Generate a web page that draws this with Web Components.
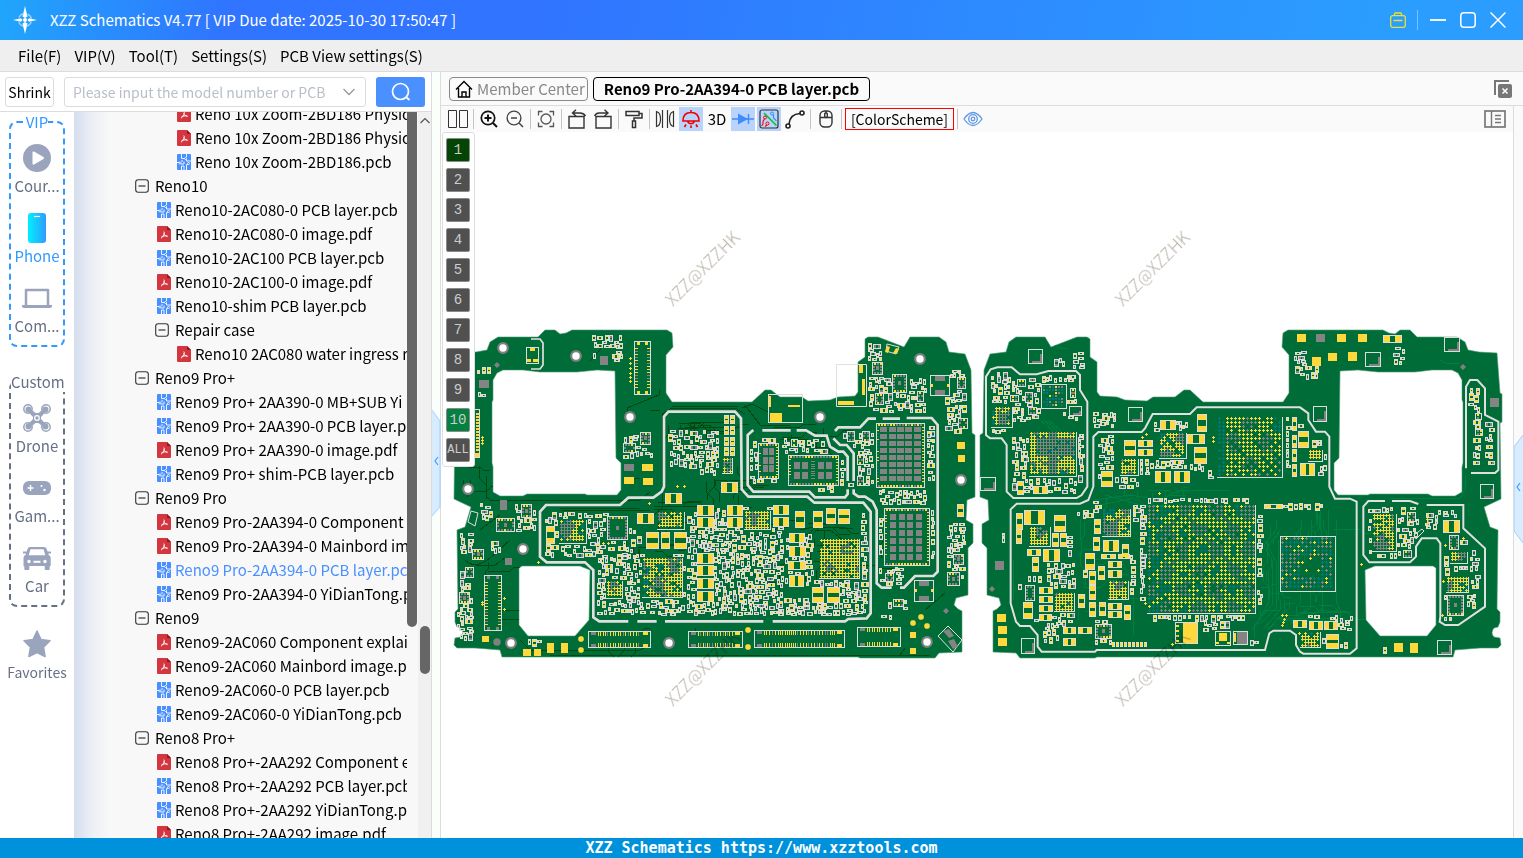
<!DOCTYPE html>
<html lang="en">
<head>
<meta charset="utf-8">
<title>XZZ Schematics</title>
<style>
html,body{height:100%;margin:0}
body{font:15px/24px "Noto Sans CJK SC","Noto Sans",sans-serif;color:#000;overflow:hidden}
</style>
</head>
<body>
<xzz-app></xzz-app>
<script>
const define = (name, css, html, setup) => {
  const t = document.createElement('template');
  t.innerHTML = `<style>*{box-sizing:border-box}button{font:inherit;color:inherit;background:none;border:0;padding:0;margin:0;cursor:pointer}svg{display:block}${css}</style>${html}`;
  customElements.define(name, class extends HTMLElement {
    connectedCallback() {
      if (this.shadowRoot) return;
      const root = this.attachShadow({mode: 'open'});
      root.append(t.content.cloneNode(true));
      if (setup) setup(this, root);
    }
  });
};

/* ---------- icons ---------- */
const PDF = '<path d="M1 0h9l4 4v11q0 1-1 1H1q-1 0-1-1V1q0-1 1-1z" fill="#d3363e"/><path d="M10 0l4 4h-3q-1 0-1-1z" fill="#8f151c"/><path d="M6.700 5.500q.6 0 .5 1.400c-.3 2-1.500 4.200-3.200 5.300M7 7.500c.5 1.500 2 2.800 3.600 2.800M4.500 10.800c1.500-.9 3.700-1.200 5.800-.7" fill="none" stroke="#fff" stroke-width="1"/>';
const PCB = '<rect width="14" height="16" rx="1" fill="#4a8fff"/><path d="M4.500 0v4.500h3M9.500 0v3M9.500 5v2H14M0 8.500h2M4 10H7V7.500M7 16v-4H4.500V16M9.500 16V10.500h1.500M5 8V6" fill="none" stroke="#fff" stroke-width=".9"/><g fill="#4a8fff" stroke="#fff" stroke-width=".8"><circle cx="8.500" cy="4.500" r="1"/><circle cx="3" cy="9" r="1"/><circle cx="11.500" cy="9.500" r="1"/></g>';
const ICONS = {
  pdf: ['0 0 14 16', PDF], pcb: ['0 0 14 16', PCB],
  minus: ['0 0 14 14', '<rect x=".7" y=".7" width="12.600" height="12.600" rx="2.500" fill="none" stroke="#333" stroke-width="1.100"/><path d="M3.500 7h7" stroke="#333" stroke-width="1.200"/>'],
  logo: ['0 0 24 28', '<path d="M12 0l2.500 10.500L12 12l-2.500-1.500zM12 28l2.500-10.500L12 16l-2.500 1.500zM0 14l8-1.800L9.500 14 8 15.800zM24 14l-8-1.800L14.500 14l1.500 1.800z" fill="#fff"/><circle cx="12" cy="14" r="2" fill="#fff"/><circle cx="12" cy="14" r="6.500" fill="none" stroke="#9fd3ff" stroke-width="1.300" stroke-dasharray="6 4.200" stroke-dashoffset="-2"/>'],
  bag: ['0 0 16 16', '<g fill="none" stroke="#e8e03a" stroke-width="1.300"><rect x=".7" y="3.700" width="14.600" height="11.600" rx="2"/><path d="M4.500 3.500v-1.500q0-1 1-1h5q1 0 1 1v1.500M3.500 8.500h9"/></g>'],
  min: ['0 0 16 16', '<path d="M0 8h16" stroke="#fff" stroke-width="1.800"/>'],
  max: ['0 0 16 16', '<rect x=".8" y=".8" width="14.400" height="14.400" rx="3" fill="none" stroke="#fff" stroke-width="1.500"/>'],
  close: ['0 0 16 16', '<path d="M.5.5l15 15M15.500.5l-15 15" stroke="#fff" stroke-width="1.500"/>'],
  search: ['0 0 20 20', '<circle cx="9.500" cy="9.500" r="8" fill="none" stroke="#fff" stroke-width="1.700"/><path d="M15 15l3.500 3" stroke="#fff" stroke-width="1.700"/>'],
  chev: ['0 0 12 8', '<path d="M.5 1L6 6.500 11.500 1" fill="none" stroke="#999" stroke-width="1.300"/>'],
  up: ['0 0 10 10', '<path d="M.5 7L5 2.500 9.500 7" fill="none" stroke="#555" stroke-width="1.200"/>'],
  home: ['0 0 18 18', '<g fill="none" stroke="#000" stroke-width="1.400"><path d="M1 9.500L9 1.500l8 8M3.500 8v9h11V8"/><path d="M7 17v-5h4v5"/></g>'],
  closeall: ['0 0 18 18', '<path d="M1 15V1h14" fill="none" stroke="#777" stroke-width="2"/><rect x="4" y="4" width="14" height="14" rx="2" fill="#777"/><path d="M8.500 8.500l5 5m0-5l-5 5" stroke="#fff" stroke-width="1.500"/>'],
  panel: ['0 0 22 18', '<rect x="1" y="1" width="20" height="16" fill="none" stroke="#777" stroke-width="1.700"/><path d="M7.500 1v16M11 5.500h6M11 9h6M11 12.500h6" stroke="#777" stroke-width="1.400"/>'],
  play: ['0 0 28 28', '<circle cx="14" cy="14" r="14" fill="#9aa5bd"/><path d="M9.500 8.500q0-1.500 1.500-1l9.500 5.500q1 1 0 2L11 20.500q-1.500.5-1.500-1z" fill="#fff"/>'],
  phone: ['0 0 18 30', '<defs><linearGradient id="a"><stop stop-color="#00f0ff"/><stop offset="1" stop-color="#2f9bff"/></linearGradient></defs><rect width="18" height="30" rx="3" fill="url(#a)"/><path d="M6 3.500h6" stroke="#fff" stroke-width="1.200"/>'],
  laptop: ['0 0 30 20', '<path d="M4 17V2h22v15" fill="none" stroke="#9aa5bd" stroke-width="2.500" stroke-linejoin="round"/><path d="M0 17h30v1q0 2-2 2H2q-2 0-2-2z" fill="#9aa5bd"/>'],
  drone: ['0 0 28 28', '<g fill="none" stroke="#9aa5bd" stroke-width="1.500"><circle cx="5" cy="5" r="4.200"/><circle cx="23" cy="5" r="4.200"/><circle cx="5" cy="23" r="4.200"/><circle cx="23" cy="23" r="4.200"/></g><g fill="#9aa5bd"><circle cx="5.500" cy="5.500" r="3"/><circle cx="22.500" cy="5.500" r="3"/><circle cx="5.500" cy="22.500" r="3"/><circle cx="22.500" cy="22.500" r="3"/><path d="M4 6.500L6.500 4l6 5h3l6-5L24 6.500 18 13v2l6 6.500-2.500 2.500-6-5h-3l-6 5L4 21.500 10 15v-2z"/></g><circle cx="14" cy="14" r="2.300" fill="none" stroke="#fff" stroke-width="1.200"/>'],
  game: ['0 0 28 14', '<rect width="28" height="14" rx="6" fill="#9aa5bd"/><path d="M7.500 4v6M4.500 7h6" stroke="#fff" stroke-width="1.400"/><circle cx="18.500" cy="5" r="1" fill="#fff"/><circle cx="21.500" cy="9" r="1.200" fill="#fff"/>'],
  car: ['0 0 28 23', '<path d="M7 0h14q2 0 2.700 2l2 6q2 .5 2 3v8h-1v3q0 1-1 1h-3q-1 0-1-1v-3H6.300v3q0 1-1 1h-3q-1 0-1-1v-3H.5v-8q0-2.500 2-3l2-6Q5.200 0 7 0z" fill="#9aa5bd"/><path d="M0 5.500h4M24 5.500h4" stroke="#9aa5bd" stroke-width="2"/><path d="M7.500 2.200h13l1.800 6H5.700z" fill="#fff"/><path d="M10.500 14.800h7" stroke="#fff" stroke-width="2"/><circle cx="6" cy="14.500" r="1.700" fill="#fff"/><circle cx="22" cy="14.500" r="1.700" fill="#fff"/>'],
  star: ['0 0 28 28', '<path d="M14 1l4 8.500 9 1.300-6.500 6.400 1.600 9.300L14 22.500l-8.100 4 1.600-9.300L1 10.800l9-1.300z" fill="#9aa5bd" stroke="#9aa5bd" stroke-width="1.500" stroke-linejoin="round"/>'],
  split: ['0 0 20 20', '<path d="M.5 1.500h8v17h-8zM11.500 1.500h8v17h-8z" fill="none" stroke="#333" stroke-width="1"/>'],
  zin: ['0 0 20 20', '<circle cx="9" cy="9" r="6.700" fill="none" stroke="#111" stroke-width="1.700"/><path d="M5.500 9h7M9 5.500v7M14 14l4 4" stroke="#111" stroke-width="2"/>'],
  zout: ['0 0 20 20', '<circle cx="9" cy="9" r="6.900" fill="none" stroke="#444" stroke-width="1.400"/><path d="M6 9h6M14 14l4 4" stroke="#444" stroke-width="1.500"/>'],
  fit: ['0 0 20 20', '<g fill="none" stroke="#555" stroke-width="1.300"><circle cx="10" cy="10" r="5"/><path d="M2.500 6.500v-4h4M13.500 2.500h4v4M17.500 13.500v4h-4M6.500 17.500h-4v-4"/></g>'],
  rotl: ['0 0 20 20', '<path d="M2 7.500h15V19H2zM6 4h7q3.500 0 5.500 3M9 .8L5.500 4 9 7" fill="none" stroke="#333" stroke-width="1.400" transform="translate(0 0)"/>'],
  rotr: ['0 0 20 20', '<path d="M3 7.500h15V19H3zM14 4H6Q3 4 1.500 7M11.500.8L15 4l-3.500 3" fill="none" stroke="#333" stroke-width="1.400"/>'],
  paint: ['0 0 20 20', '<g fill="none" stroke="#333" stroke-width="1.500"><path d="M2 2.500h13v4H2zM15 4.500h3V9h-8v3"/><path d="M8.500 12h3v6.500h-3z"/></g>'],
  mirror: ['0 0 20 20', '<path d="M7.500 1v18M12.500 1v18M1.500 2.500q4 1 4 7.500t-4 7.500zM18.500 2.500q-4 1-4 7.500t4 7.500z" fill="none" stroke="#333" stroke-width="1.200"/>'],
  lamp: ['0 0 20 20', '<g fill="none" stroke="#f00000" stroke-width="1.600"><path d="M2 12Q2 3.500 10 3.500T18 12zM10 3.500V1M6.500 12.500q3.500 4.500 7 0"/><path d="M10 16.500V19M5 15.500L3.500 18M15 15.500l1.500 2.500"/></g>'],
  diode: ['0 0 24 20', '<path d="M1 10h22M17.500 5v10" stroke="#3f8cff" stroke-width="1.400"/><path d="M7 4.500L17 10 7 15.500z" fill="#3f8cff"/>'],
  route: ['0 0 20 20', '<rect x="1" y="1" width="18" height="18" rx="2" fill="none" stroke="#333" stroke-width="1.200"/><path d="M5 4L17.500 16.500" stroke="#00c030" stroke-width="1.500"/><path d="M2.500 17L4 15V12.500L5.500 10M8 16l-2 1.500" fill="none" stroke="#f00" stroke-width="1.100"/><path d="M14.500 5.500V9l3 3" fill="none" stroke="#2f8cff" stroke-width="1.100"/><circle cx="6" cy="8.500" r="1.500" fill="none" stroke="#f00"/><circle cx="8.500" cy="14.500" r="1.500" fill="none" stroke="#f00"/><circle cx="13" cy="4.500" r="1.500" fill="none" stroke="#2f8cff"/>'],
  curve: ['0 0 20 20', '<g fill="none" stroke="#222" stroke-width="1.600"><path d="M4 15Q5 5 15 4.500"/><circle cx="17" cy="4" r="2"/><circle cx="3" cy="17" r="2"/></g>'],
  mouse: ['0 0 20 20', '<g fill="none" stroke="#333" stroke-width="1.400"><rect x="4" y="2" width="12" height="16" rx="4.500"/><path d="M4 8.500h12M10 2v2"/><rect x="8.700" y="4" width="2.600" height="4.500" rx="1"/></g>'],
  eye: ['0 0 20 20', '<g fill="none" stroke="#5f98e8" stroke-width="1.300"><path d="M1 10Q10-3 19 10 10 23 1 10z"/><circle cx="10" cy="10" r="4.300"/><circle cx="10" cy="10" r="1.800"/></g>']
};
define('ui-icon', ':host{display:block;flex:none}', '<svg aria-hidden="true"></svg>', (el, root) => {
  const [vb, body] = ICONS[el.getAttribute('name')];
  const s = root.querySelector('svg');
  const [, , w, h] = vb.split(' ');
  s.setAttribute('viewBox', vb);
  s.setAttribute('width', w); s.setAttribute('height', h);
  s.innerHTML = body;
});

/* ---------- window chrome ---------- */
define('title-bar', `
:host{display:flex;align-items:center;height:40px;padding:0 17px 0 13px;color:#fff;background:linear-gradient(100deg,#20a6fb 0,#3074ff 15%,#3074ff 35%,#2b9dff 90%)}
h1{font:inherit;margin:0 auto 0 13px;white-space:nowrap}
i{width:1px;height:20px;background:#7fc0ff;margin:0 12px 0 11px}
div{display:flex;gap:14px}`,
`<ui-icon name="logo"></ui-icon><h1>XZZ Schematics V4.77 [ VIP Due date: 2025-10-30 17:50:47 ]</h1>
<button aria-label="Toolbox"><ui-icon name="bag"></ui-icon></button><i></i>
<div><button aria-label="Minimize"><ui-icon name="min"></ui-icon></button><button aria-label="Maximize"><ui-icon name="max"></ui-icon></button><button aria-label="Close"><ui-icon name="close"></ui-icon></button></div>`);

define('menu-bar', `
:host{display:block;height:32px;background:#efefef;border-bottom:1px solid #dcdcdc}
nav{display:flex;gap:13px;padding:4px 18px 0;line-height:24px}`,
`<nav><button>File(F)</button><button>VIP(V)</button><button>Tool(T)</button><button>Settings(S)</button><button>PCB View settings(S)</button></nav>`);

define('search-bar', `
:host{display:flex;align-items:center;gap:10px;height:40px;padding:0 6px 0 5px;background:#fff;border-bottom:1px solid #dcdcdc;font-size:14px}
.s{width:49px;height:30px;border:1px solid #dcdcdc;border-radius:3px;white-space:nowrap;display:flex;justify-content:center;align-items:center}
label{flex:1;display:flex;align-items:center;height:30px;min-width:0;border:1px solid #dcdcdc;border-radius:3px;padding:0 10px 0 8px;gap:4px}
input{flex:1;min-width:0;border:0;outline:0;padding:0;background:none;font:inherit}
input::placeholder{color:#b9bfc7;opacity:1}
.b{width:49px;height:30px;border-radius:3px;background:#4a90ff;display:flex;justify-content:center;align-items:center}`,
`<button class="s">Shrink</button><label><input aria-label="Search model" placeholder="Please input the model number or PCB"><ui-icon name="chev"></ui-icon></label><button class="b" aria-label="Search"><ui-icon name="search"></ui-icon></button>`);

/* ---------- left rail ---------- */
define('rail-item', `
:host{display:block;height:70px;color:#667085}
:host([active]){color:#3399ff}
button{display:grid;grid-template-rows:40px 16px;justify-items:center;align-items:center;width:100%;line-height:16px}`,
`<button><slot></slot></button>`, (el, root) => {
  const i = document.createElement('ui-icon');
  i.setAttribute('name', el.getAttribute('icon'));
  root.querySelector('button').prepend(i);
});
define('rail-group', `
:host{display:block;--c:#667085}
:host([vip]){--c:#3399ff}
fieldset{min-width:0;margin:0;padding:6px 0 0;border:2px dashed var(--c);border-radius:8px;height:235px}
legend{margin:0 auto;padding:0;color:var(--c);line-height:20px;white-space:nowrap}`,
`<fieldset><legend></legend><slot></slot></fieldset>`, (el, root) => { root.querySelector('legend').textContent = el.getAttribute('label'); });
define('nav-rail', `
:host{display:flex;flex-direction:column;width:74px;padding:0 9px;background:#fff;overflow:hidden;gap:25px}
rail-item.f{margin:-8px -9px 0;font-size:14px}`,
`<rail-group vip label="VIP"><rail-item icon="play">Cour...</rail-item><rail-item icon="phone" active>Phone</rail-item><rail-item icon="laptop">Com...</rail-item></rail-group>
<rail-group label="Custom"><rail-item icon="drone">Drone</rail-item><rail-item icon="game">Gam...</rail-item><rail-item icon="car">Car</rail-item></rail-group>
<rail-item class="f" icon="star">Favorites</rail-item>`);

/* ---------- file tree ---------- */
define('tree-row', `
:host{display:flex;align-items:center;gap:4px;height:24px;white-space:nowrap;padding-left:calc(43px + var(--d,1)*20px)}
:host([folder]){gap:6px;padding-left:calc(41px + var(--d,1)*20px)}
:host([selected]){color:#4a90ff}
a{color:inherit;text-decoration:none}`,
`<a href="#"><slot></slot></a>`, (el, root) => {
  const k = el.getAttribute('kind');
  const i = document.createElement('ui-icon');
  i.setAttribute('name', k);
  if (k === 'minus') el.setAttribute('folder', '');
  el.style.setProperty('--d', el.getAttribute('depth'));
  root.querySelector('a').before(i);
});
const TREE = `3 pdf Reno 10x Zoom-2BD186 Physic
3 pdf Reno 10x Zoom-2BD186 Physic
3 pcb Reno 10x Zoom-2BD186.pcb
1 minus Reno10
2 pcb Reno10-2AC080-0 PCB layer.pcb
2 pdf Reno10-2AC080-0 image.pdf
2 pcb Reno10-2AC100 PCB layer.pcb
2 pdf Reno10-2AC100-0 image.pdf
2 pcb Reno10-shim PCB layer.pcb
2 minus Repair case
3 pdf Reno10 2AC080 water ingress ri
1 minus Reno9 Pro+
2 pcb Reno9 Pro+ 2AA390-0 MB+SUB Yi
2 pcb Reno9 Pro+ 2AA390-0 PCB layer.pc
2 pdf Reno9 Pro+ 2AA390-0 image.pdf
2 pcb Reno9 Pro+ shim-PCB layer.pcb
1 minus Reno9 Pro
2 pdf Reno9 Pro-2AA394-0 Component
2 pdf Reno9 Pro-2AA394-0 Mainbord im
2 pcb Reno9 Pro-2AA394-0 PCB layer.pcb
2 pcb Reno9 Pro-2AA394-0 YiDianTong.p
1 minus Reno9
2 pdf Reno9-2AC060 Component explain
2 pdf Reno9-2AC060 Mainbord image.pd
2 pcb Reno9-2AC060-0 PCB layer.pcb
2 pcb Reno9-2AC060-0 YiDianTong.pcb
1 minus Reno8 Pro+
2 pdf Reno8 Pro+-2AA292 Component e
2 pcb Reno8 Pro+-2AA292 PCB layer.pcb
2 pcb Reno8 Pro+-2AA292 YiDianTong.p
2 pdf Reno8 Pro+-2AA292 image.pdf`;
define('file-tree', `
:host{display:flex;min-width:0;flex:1;background:linear-gradient(90deg,#d5deee 0,#eceff5 18px,#f8f8f8 36px);overflow:hidden}
.rows{flex:1;min-width:0;overflow:hidden}
.in{margin-top:-10px}
.t1,.t2{width:11px;flex:none}
.t1 i{display:block;height:71%;background:#666;border-radius:0 0 5px 5px;width:10px}
.t2{width:13px;background:#f0f0f0;padding:4px 1px 0 2px;display:grid;grid-template-rows:10px 500px 48px}
.t2 i{grid-row:3;background:#666;border-radius:5px;width:10px}`,
`<div class="rows"><div class="in"></div></div><div class="t1"><i></i></div><div class="t2"><ui-icon name="up"></ui-icon><i></i></div>`, (el, root) => {
  root.querySelector('.in').innerHTML = TREE.split('\n').map((l, n) => {
    const m = l.match(/^(\d) (\w+) (.*)$/);
    return `<tree-row depth="${m[1]}" kind="${m[2]}"${n === 19 ? ' selected' : ''}>${m[3]}</tree-row>`;
  }).join('');
});

/* ---------- document area ---------- */
define('doc-tabs', `
:host{display:flex;align-items:center;gap:5px;height:34px;padding:0 11px 0 8px;background:#fafafa;border-bottom:1px solid #dcdcdc}
.t{display:flex;align-items:center;height:24px;line-height:22px;border:1px solid #888;border-radius:4px;white-space:nowrap}
.h{width:139px;gap:4px;padding-left:5px;color:#888}
.a{width:277px;justify-content:center;border-color:#000;font-weight:700}
.x{margin-left:auto}`,
`<button class="t h"><ui-icon name="home"></ui-icon>Member Center</button><button class="t a">Reno9 Pro-2AA394-0 PCB layer.pcb</button><button class="x" aria-label="Close all"><ui-icon name="closeall"></ui-icon></button>`);

define('tool-bar', `
:host{display:flex;align-items:center;gap:2px;height:26px;padding:0 6px 0 5px;background:#fafafa}
button{width:24px;height:24px;display:flex;align-items:center;justify-content:center;flex:none}
.on{background:#b9d3fb}
i{width:1px;height:20px;background:#c4c4c4;margin:0 1px}
.c{width:109px;height:22px;border:1px solid #f00;font-size:14px}
.e{margin-left:auto}`, '', (el, root) => {
  const spec = 'split | zin zout | fit | rotl rotr | paint | mirror lamp* 3D diode* route* curve | mouse | C | eye'.split(' ');
  root.innerHTML += spec.map(s => {
    if (s === '|') return '<i></i>';
    if (s === '3D') return '<button>3D</button>';
    if (s === 'C') return '<button class="c">[ColorScheme]</button>';
    const on = s.endsWith('*'), n = s.replace('*', '');
    return `<button aria-label="${n}"${on ? ' class="on"' : ''}><ui-icon name="${n}"></ui-icon></button>`;
  }).join('') + '<button class="e" aria-label="panel"><ui-icon name="panel"></ui-icon></button>';
});

define('layer-panel', `
:host{display:flex;flex-direction:column;gap:6px;padding:5px 4px 4px 3px;background:#fff;border:1px solid #ddd;border-radius:3px;font:14px/20px "Liberation Mono",monospace;color:#ccc}
button{width:24px;height:24px;border:1px solid #8a8a8a;border-radius:2px;background:#505050;display:flex;align-items:center;justify-content:center}
.f{background:#044404}.g{background:#048040}.l{font-size:12px}`, '', (el, root) => {
  root.innerHTML += [1,2,3,4,5,6,7,8,9,10,'ALL'].map(n => `<button class="${n === 1 ? 'f' : n === 10 ? 'g' : n === 'ALL' ? 'l' : ''}">${n}</button>`).join('');
});

/* ---------- board drawing ---------- */
function drawBoards() {
  let seed = 7;
  const rnd = () => (seed = (seed * 1664525 + 1013904223) >>> 0) / 4294967296;
  const W = 1600, occ = new Uint8Array(W * 700);
  const L = {w: '', g: '', y: '', k: '', t: ''};
  const R = (c, x, y, w, h) => { L[c] += `M${x} ${y}h${w}v${h}h${-w}z`; };
  const mark = (x, y, w, h) => { for (let j = y; j < y + h; j++) occ.fill(1, j * W + x, j * W + x + w); };
  const free = (x, y, w, h) => { for (let j = y; j < y + h; j++) for (let i = x; i < x + w; i++) if (occ[j * W + i]) return false; return true; };
  const q = (ox, a) => [ox + Math.round(a[0] / 3), 320 + Math.round(a[1] / 3), Math.round(a[2] / 3), Math.round(a[3] / 3)];
  const frame = (x, y, w, h) => { R('w', x, y, w, h); R('g', x + 1, y + 1, w - 2, h - 2); mark(x, y, w, h); };
  const each = (ox, list, fn) => list.trim().split(/\s*;\s*/).forEach(s => { const a = s.split(/[ ,]+/).map(Number); fn(...q(ox, a), ...a.slice(4)); });
  const capH = (x, y, w, h) => { frame(x, y, w, h); const p = Math.max(1, Math.round(w * .3)); R('y', x + 1, y + 1, p, h - 2); R('y', x + w - 1 - p, y + 1, p, h - 2); };
  const capV = (x, y, w, h) => { frame(x, y, w, h); const p = Math.max(1, Math.round(h * .3)); R('y', x + 1, y + 1, w - 2, p); R('y', x + 1, y + h - 1 - p, w - 2, p); };
  const gold = (x, y, w, h) => { R('y', x, y, w, h); mark(x, y, w, h); };
  const grey = (x, y, w, h) => { R('k', x, y, w, h); mark(x, y, w, h); };
  const corner = (x, y, w, h) => { frame(x, y, w, h); R('k', x + w - 3, y + 5, 2, h - 6); R('k', x + 4, y + h - 3, w - 6, 2); };
  const conn = (x, y, w, h) => {
    frame(x, y, w, h);
    if (w > h) {
      for (let i = 10; i < w - 10; i += rnd() < .4 ? 3 : 2) { const c = rnd() < .75 ? 'y' : 'k'; R(c, x + i, y + 1, 1, 4); R(c, x + i, y + h - 5, 1, 4); }
      for (const j of [1, h - 4]) { R('k', x + 3, y + j, 5, 3); R('y', x + w - 8, y + j, 5, 3); }
    } else {
      for (let i = 7; i < h - 6; i += 3) { const c = rnd() < .8 ? 'y' : 'k'; R(c, x + 1, y + i, 3, 1); R(c, x + w - 4, y + i, 3, 1); }
      for (const j of [1, h - 4]) { R(h > 55 ? 'k' : 'y', x + 3, y + j, 3, 3); R(h > 55 ? 'k' : 'y', x + w - 6, y + j, 3, 3); }
    }
  };
  const chip = (x, y, w, h) => {
    frame(x, y, w, h);
    for (let i = 2; i < w - 2; i += 3) { R(rnd() < .5 ? 'k' : 'y', x + i, y + 1, 2, 2); R(rnd() < .6 ? 'k' : 'y', x + i, y + h - 3, 2, 2); }
    for (let i = 4; i < h - 4; i += 3) { R('k', x + 1, y + i, 2, 2); R('k', x + w - 3, y + i, 2, 2); }
    if (w > 10 && h > 10) R('k', x + (w >> 1) - 1, y + (h >> 1) - 2, 3, 4);
  };
  /* mode: 0 mostly gold, 1 gold + grey + teal, 2 sparse teal/grey ring, 3 grey upper half, 4 diagonal weave, 5 dark with teal dots */
  const bga = (x, y, w, h, mode = 0, p = 4) => {
    for (let j = 0; j + 3 <= h; j += p) for (let i = 0; i + 3 <= w; i += p) {
      const u = i / w, v = j / h, n = Math.sin(i * .19 + x) * Math.cos(j * .16 + y) + rnd() * .9, r = rnd();
      let c = 'y';
      if (mode === 0) c = n > 1.05 ? 'k' : n < -.55 ? 't' : 'y';
      if (mode === 1) c = n > .72 ? 'k' : (n < -.35 || (u < .12 && r < .5)) ? 't' : 'y';
      if (mode === 2) { if (u > .3 && u < .68 && v > .3 && v < .7 && r < .85) continue; c = r < .4 ? 't' : r < .85 ? 'k' : 'y'; }
      if (mode === 3) c = v < .12 || v > .5 ? (u > .35 && u < .55 ? 'k' : r < .72 ? 'y' : r < .85 ? 't' : 'k') : u < .1 || u > .92 ? 'y' : r < .88 ? 'k' : 't';
      if (mode === 4) { if ((i / p + j / p) % 2 && r < .35) continue; c = u < .12 || (u > .85 && v < .25) ? 't' : n > .75 ? 'k' : 'y'; }
      if (mode === 5) { c = r < .3 ? 't' : r < .55 ? 'k' : r < .7 ? 'y' : ''; if (!c) continue; R(c, x + i, y + j, 2, 2); continue; }
      if (mode < 2 && rnd() < .05) continue;
      R(c, x + i, y + j + 1, 3, 1); R(c, x + i + 1, y + j, 1, 3);
    }
    R('w', x - 1, y + h, w + 2, 1); R('w', x + w, y, 1, h);
    mark(x - 1, y - 1, w + 2, h + 3);
  };
  const pads = (ox, f, x0, y0, cx, cy, px, py, w, h) => {
    const [X, Y, FW, FH] = q(ox, f); frame(X, Y, FW, FH);
    for (let i = 2; i < FW - 2; i += 3) { R(rnd() < .5 ? 'y' : 'k', X + i, Y + 1, 2, 2); R(rnd() < .5 ? 'y' : 'k', X + i, Y + FH - 3, 2, 2); }
    for (let i = 4; i < FH - 4; i += 3) { R(rnd() < .5 ? 'y' : 't', X + 1, Y + i, 2, 1); R('y', X + FW - 3, Y + i, 2, 1); }
    for (let j = 0; j < cy; j++) for (let i = 0; i < cx; i++) R('k', ...q(ox, [x0 + i * px, y0 + j * py, w, h]));
  };
  const SZ = [[3,5],[5,3],[4,6],[6,4],[4,7],[7,4],[3,6],[6,3],[5,8],[8,5],[3,4]];
  const scatter = (x, y, w, h, d = 1) => {
    const n = Math.round(w * h / 5 * d);
    for (let k = 0; k < n; k++) {
      const [a, b] = SZ[Math.floor(rnd() * SZ.length)];
      const X = x + Math.floor(rnd() * Math.max(1, w - a)), Y = y + Math.floor(rnd() * Math.max(1, h - b));
      if (!free(X, Y, a, b)) continue;
      const c = rnd() < .78 ? 'y' : 'k', e = rnd() < .8 ? c : 'k';
      R('w', X, Y, a, b);
      R('g', X + 1, Y + 1, a - 2, b - 2);
      const p = Math.max(a, b) > 6 ? 2 : 1;
      if (a > b) { R(c, X + 1, Y + 1, p, b - 2); R(e, X + a - 1 - p, Y + 1, p, b - 2); }
      else { R(c, X + 1, Y + 1, a - 2, p); R(e, X + 1, Y + b - 1 - p, a - 2, p); }
      mark(X, Y, a, b);
    }
  };
  const A = 440, B = 700, C = 970, D = 1240;
  const t = {
    [A]: 'M565 904H478L460 892V750L435 727H320L300 710V575L318 555H540L565 533H640L665 515L672 500V290L685 275H885L903 295L905 508L925 530H1102L1123 548H1270L1292 575V880L1280 895L1225 897L1215 904H998M592 904H650M675 904H970',
    [B]: 'M160 330L143 345V495L160 515H328L345 532H435L443 522V508M187 331H272M290 331H318L345 347H380L390 380L415 395H430L443 410V483M405 333L415 322H480L505 296H528M548 296H600M620 294H695L713 315V755L700 768H645L612 803H600M400 355L420 375H440L461 400V483M461 508V520L475 530H495L518 545L530 570V790L545 803H575',
    [C]: 'M60 355L48 345V170L62 148L82 142H125L150 163H200L235 153H318L330 165V210L352 245V500L335 525L320 534H130L110 515V375L95 355ZM355 540L330 551H140L122 568V850L138 905L150 918H180L203 945V980L215 995H375L380 990H885L898 940L910 932H960L978 945V975L990 995L1000 1001H1140L1160 985V545L1140 536H1095L1078 500V350L1065 335H1038L1015 300V280L990 262H680L660 282H548L525 325L515 336H385L370 350V500Z',
    [D]: 'M435 543H385L370 560V705L388 727H510L528 710V680L545 655H590L601 670V890L599 905L615 915H655L735 860V685L670 625V555H560M456 543H510L535 552M678 445V200L690 180H712L735 205V285L775 305V450L765 459H693'
  };
  /* reserve room under the shield tracks */
  for (const ox of [A, B, C, D]) {
    let cx = 0, cy = 0, sx = 0, sy = 0;
    for (const m of t[ox].matchAll(/([MLHVZ])([\d.]*) ?([\d.]*)/g)) {
      let nx = cx, ny = cy;
      if (m[1] === 'M') { cx = sx = nx = +m[2]; cy = sy = ny = +m[3]; }
      if (m[1] === 'L') { nx = +m[2]; ny = +m[3]; }
      if (m[1] === 'H') nx = +m[2];
      if (m[1] === 'V') ny = +m[2];
      if (m[1] === 'Z') { nx = sx; ny = sy; }
      const n = Math.ceil(Math.hypot(nx - cx, ny - cy) / 3) + 1;
      for (let i = 0; i <= n; i++) mark(Math.round(ox + (cx + (nx - cx) * i / n) / 3) - 2, Math.round(320 + (cy + (ny - cy) * i / n) / 3) - 2, 4, 4);
      cx = nx; cy = ny;
    }
  }
  /* left board */
  each(A, '117 180 30 24;480 108 24 26;180 540 21 30;195 714 20 20;552 432 30 21', grey);
  each(A, '606 432 33 21;552 471 30 21;609 474 30 21;126 948 21 18;249 987 24 21;282 987 21 21;321 969 21 30;363 969 21 30', gold);
  each(A, '583 64 51 162;133 764 55 168;445 933 190 52;745 933 166 52', conn);
  each(A, '80 268 39 148', (x, y, w, h) => { frame(x, y, w, h); for (let j = 4; j < h - 6; j += 3) R('y', x + w - 4, y + j, 3, 2); R('y', x + w - 5, y + h - 5, 4, 4); });
  each(A, '601 337 33 39;550 370 40 30;168 595 56 42;243 552 34 42;95 687 36 32;58 815 32 35;75 742 26 32;500 587 62 72', chip);
  each(A, '258 82 38 52', (x, y, w, h) => { frame(x, y, w, h); R('y', x + 1, y + h - 5, 4, 3); R('y', x + w - 6, y + h - 5, 5, 3); R('y', x + 4, y + 1, 5, 3); });
  each(A, '360 600 78 70 1;655 575 78 52 0;610 714 117 117 1;502 783 46 50 0', (x, y, w, h, a) => bga(x, y, w, h, a, 3));
  each(A, '676 519 52 32;592 580 50 32;772 556 50 33;772 592 50 33;772 698 50 33;772 736 50 33;772 774 50 33;772 812 50 33', capH);
  each(A, '617 637 38 50;663 637 27 50;702 637 38 50;319 618 27 55', capV);
  each(B, '163 931 274 55;470 922 132 60', conn);
  each(B, '515 127 33 39;524 220 28 36;575 163 44 56;770 172 28 36;773 293 30 33;760 702 33 33;740 757 38 42;578 838 32 24;442 332 24 32;486 332 24 32;470 405 22 30;472 467 22 30;556 758 26 26;272 358 20 24;650 214 22 32', chip);
  each(B, '691 166 60 64;641 780 60 65', (x, y, w, h) => { frame(x, y, w, h); R('k', x + 5, y + 1, w - 10, 5); R('k', x + 5, y + h - 6, w - 10, 5); R('y', x + 1, y + 9, 2, 3); R('y', x + w - 3, y + 9, 2, 3); });
  each(B, '771 366 24 21;774 404 21 21;630 936 18 18;630 984 18 18', gold);
  each(B, '135 573 75 53 0;360 658 117 118 0;68 414 28 46 0', (x, y, w, h, a) => bga(x, y, w, h, a, 3));
  each(B, '63 485 50 33;80 556 48 32;80 592 48 32;219 556 48 30;219 592 48 30;267 640 49 30;267 678 50 32;265 723 54 28;267 766 46 37', capH);
  each(B, '286 573 31 51;340 573 30 50;377 563 31 48;413 566 36 45;335 800 35 48;382 800 38 48;770 551 20 39;72 286 14 26;90 286 16 26;72 318 14 26;90 318 16 26;72 350 14 26;90 350 16 26;72 382 14 26;90 382 16 26', capV);
  pads(B, [529, 308, 148, 195], 541, 322, 5, 8, 25, 21, 22, 16);
  pads(B, [551, 564, 137, 174], 570, 582, 4, 6, 26, 24, 19, 19);
  pads(B, [175, 370, 63, 108], 189, 384, 2, 3, 19, 26, 15, 21);
  pads(B, [263, 405, 153, 92], 282, 427, 2, 2, 25, 30, 18, 20);
  for (let i = 0; i < 2; i++) for (let j = 0; j < 2; j++) R('k', ...q(B, [354 + i * 25, 427 + j * 30, 18, 20]));
  for (let j = 0; j < 8; j++) R('k', ...q(B, [332, 424 + j * 7, 12, 3]));
  each(B, '203 223 101 85', (x, y, w, h) => { R('w', x, y, w, 1); R('w', x, y + h, w, 1); R('w', x, y, 1, h); R('w', x + w, y, 1, h + 1); R('y', x + 1, y + 2, 2, 11); R('y', x + 2, y + 19, 12, 9); R('y', x + 20, y + 11, 12, 2); mark(x, y, w, h); });
  each(B, '409 133 90 126', (x, y, w, h) => { R('y', x + 2, y + h - 5, 16, 4); R('y', x + w - 4, y + 15, 3, 16); R('y', x + w - 7, y + 1, 4, 8); mark(x, y, w, h); });
  /* circles reserve their own room */
  const holes = [[A,190,85],[A,409,109],[A,571,292],[A,85,506],[A,250,688],[A,214,970],[A,687,970],[B,361,290],[B,661,116],[B,782,481],[B,682,965]].map(([o, x, y]) => [Math.round(o + x / 3), Math.round(320 + y / 3)]);
  holes.forEach(([x, y]) => mark(x - 8, y - 8, 16, 16));
  each(A, '455 45 95 45;515 90 38 45;460 90 14 30;545 345 95 75;683 330 157 120;225 545 70 95;60 640 45 70;60 745 42 150;50 860 55 105;310 575 200 140 .9;470 700 270 190 1.300;500 620 110 80 .3;740 570 100 320 1.600;120 545 45 60;150 655 35 55;265 957 45 16;108 140 50 24;108 215 40 18;640 840 200 50', scatter);
  each(B, '0 330 62 145;0 560 255 330 2;255 640 90 170;505 65 45 65;505 170 180 110 1.200;740 150 65 30;735 210 70 135 1.200;420 330 106 175;682 305 26 180 1.200;535 508 155 52 1.500;148 355 100 140;245 355 165 50;350 499 60 20;740 610 60 190;536 735 80 70;560 835 70 40;692 570 14 160;482 560 24 320;230 830 260 60 1.600;330 780 160 110;540 885 40 10;536 585 14 140', scatter);
  /* right board */
  each(C, '65 260 60 60 1;180 337 137 133 3;452 418 52 47 0;570 340 78 75 1;398 568 80 80 1;180 622 60 56 0;416 782 57 53 0;256 820 58 54 0', (x, y, w, h, a) => bga(x, y, w, h, a, 3));
  each(C, '212 192 77 76', (x, y, w, h) => { frame(x, y, w, h); bga(x + 2, y + 2, w - 4, h - 4, 5, 3); });
  each(C, '745 290 193 180 4;535 555 320 323 1', (x, y, w, h, a) => bga(x, y, w, h, a, 4));
  each(C, '570 301 47 30;650 342 53 31;505 360 45 20;505 388 45 22;556 453 47 37;612 453 47 37;162 570 64 45;400 660 48 37;414 724 43 22;414 750 43 24;208 802 43 22;208 829 43 22;208 856 43 22;208 883 38 22;414 849 43 20;414 874 43 20;172 688 43 22;220 688 50 40;280 922 38 22;324 922 43 22;278 954 40 24;393 703 46 16;445 703 36 16;190 498 44 24', capH);
  each(C, '680 281 30 53;672 380 38 50;463 360 35 48;394 453 36 48;252 584 37 50;346 698 31 52;160 846 30 52;357 845 22 45;388 847 20 42;463 855 22 44;324 823 22 42;358 753 20 42;358 796 20 46;385 738 20 42;187 710 22 44;138 580 20 50;137 628 18 46;245 640 21 42;270 640 21 42;142 484 22 42;373 598 20 44;370 652 20 42;455 672 20 42', capV);
  each(C, '616 906 70 65', (x, y, w, h) => { frame(x, y, w, h); R('y', x + 8, y + 1, 14, h - 2); for (let j = 3; j < h - 2; j += 5) R('y', x + 1, y + j, 3, 2); });
  each(C, '736 932 47 44', (x, y, w, h) => { frame(x, y, w, h); R('y', x + 4, y + 2, 8, 8); R('y', x + 1, y + 11, 3, 2); R('y', x + 12, y + 11, 3, 2); });
  each(C, '790 932 46 42', (x, y, w, h) => { frame(x, y, w, h); R('k', x + 4, y + 1, w - 5, h - 2); R('y', x + 1, y + 2, 2, 9); });
  each(C, '425 965 102 14', (x, y, w, h) => { for (let i = 0; i < w; i += 4) { R('w', x + i, y, 3, h); R('y', x + i, y + 1, 2, 3); } });
  each(C, '175 88 46 45;475 262 45 45;30 472 47 43;154 955 43 48;298 258 40 30', corner);
  each(C, '165 795 30 48;166 216 24 32;120 226 26 22;140 178 26 24;374 912 52 44;173 260 26 24;300 205 18 30', chip);
  each(C, '81 881 27 24;84 918 27 24;84 954 27 24', gold);
  each(C, '75 723 27 27', grey);
  each(C, '62 155 62 100 1.200;125 170 90 138 1.100;215 165 105 26 1.600;290 205 35 50;275 270 50 35;60 325 60 22;125 350 54 130;325 335 20 160 1.500;125 475 200 50 1.500;250 110 42 32;310 95 40 55;365 275 75 50;385 345 50 140;435 470 75 40;510 410 45 60;545 300 110 40;556 420 110 30;660 430 50 30;710 440 28 40;535 535 310 18 2;488 555 12 60;510 555 18 290 2;320 570 60 30;370 540 30 50;480 700 22 130;230 730 90 80 1.300;165 765 60 30;220 910 50 70 1.200;140 790 22 30;290 640 20 80;240 880 80 60;340 750 16 40;550 885 280 14;700 890 90 50;370 900 60 80;158 895 60 14;95 630 16 55', scatter);
  each(D, '171 42 27 24;291 42 27 24;354 42 27 24;216 111 27 27;264 99 27 24;324 96 27 27;462 969 27 27;510 969 24 30', gold);
  each(D, '228 42 27 24;750 234 27 27', grey);
  each(D, '376 97 49 45;613 52 48 46;218 259 42 48;721 493 43 46;590 961 44 45', corner);
  each(D, '428 46 58 24;180 430 46 38;609 600 50 38;160 900 43 24;208 902 43 26;252 903 43 26;72 552 58 15', capH);
  each(D, '174 334 32 52;259 942 40 46;156 292 14 42;156 344 14 40;156 388 14 40;156 432 14 40', capV);
  each(D, '622 825 52 62;628 645 31 45;500 575 28 30;704 280 20 20;704 328 24 20;490 690 26 24', chip);
  each(D, '124 650 163 162 2', (x, y, w, h, a) => { bga(x, y, w, h, a, 4); R('w', x - 1, y - 1, w + 2, 1); R('w', x - 1, y, 1, h); });
  each(D, '400 583 70 110 1;206 390 38 32 0;184 936 58 44 0;634 696 47 34 0;622 770 62 46 0', (x, y, w, h, a) => bga(x, y, w, h, a, 3));
  each(D, '162 82 42 95;195 130 50 55;458 80 40 60;685 205 40 60;700 250 26 200;735 300 32 145;138 290 12 170;170 310 30 24;210 350 40 35;235 400 30 75;130 550 125 25 1.500;50 585 22 190 1.200;50 800 22 70;380 560 90 24 1.300;472 560 70 150 1.200;384 585 16 130;400 695 80 24 1.300;555 570 50 65;600 570 60 28;660 660 20 30;685 690 38 50;612 695 22 180;686 765 40 55;680 820 30 50;610 890 30 14;0 885 12 14;200 885 50 10;260 884 84 50;300 965 34 24;30 960 30 20;245 945 14 40;420 980 34 22;640 738 80 10', scatter);

  const OUT = 'M458 353L476 352L487 350L490 342L498 337H538L545 330H555L560 334L566 333L572 330H667L672 333L673 347L666 355V393L672 402H752L765 390H771L780 397H802L808 401L830 400L838 397L855 396L858 392V362L865 357V339L868 337H878L904 347L910 337H939L946 342L949 352L965 354L971 370L972 433L975 435V497L967 500L966 520L973 524V543L968 548V595L956 598L954 605L958 609L962 611V652L939 653L935 658H860L858 657H502L500 650L475 648H457L454 645L455 638L461 637Q465 633 461 628L457 627L455 622V612L458 609L457 530L465 527L471 507L454 499L455 423L453 422V394L455 393ZM493 380L497 373L503 370H523L540 372H577L597 370L615 371L616 458L621 463V490L617 495H587L585 494H527L523 496H500L493 492V467L492 463V402L493 400ZM519 568L522 566H580L590 570L589 620L575 636H528L519 625Z';
  const traces = (ox, n, boxes) => {
    let d = '';
    for (const [x, y, w, h] of boxes) for (let k = 0; k < n; k++) {
      const X = ox + (x + rnd() * w) / 3, Y = 320 + (y + rnd() * h) / 3, l = 6 + rnd() * 26, s = rnd() < .5 ? 1 : -1, m = 3 + rnd() * 6;
      d += rnd() < .5 ? `M${X | 0}.5 ${Y | 0}.5h${l | 0}l${m | 0} ${(m | 0) * s}h${l >> 1}` : `M${X | 0}.5 ${Y | 0}.5v${l >> 1}l${(m | 0) * s} ${m | 0}v${l >> 1}`;
    }
    return d;
  };
  const dark = 'M627 418V408L659 395V390M648 520L662 508V414L672 408H735L745 414M672 406H738M650 410H660M486 476V496L490 500H640L650 492M560 508H640M562 510H650M690 422H735M685 427H740M500 515L480 530M510 540L490 558Q475 570 465 560M476 565H495L505 558M520 640L530 650H640L650 645M550 655H930M695 644V628M770 630V644M768 412L752 404L742 408M590 361L600 350V344M870 655H900L905 648M925 610L945 593M712 648L720 640M850 545L830 530H815M780 565L800 560M630 480L640 478M745 405L760 425H790M800 530L845 520' +
    traces(A, 12, [[610, 540, 200, 80], [520, 660, 200, 40], [680, 300, 150, 40]]) + traces(B, 12, [[200, 310, 200, 60], [0, 440, 120, 90], [320, 600, 60, 180], [0, 600, 460, 200], [540, 600, 20, 100]]) + traces(A, 5, [[140, 690, 60, 230], [460, 935, 150, 30], [60, 420, 60, 120]]);
  const light = 'M1055 345L1060 348H1068M1040 420L1052 430L1056 442M1044 420L1056 430L1060 440M1048 420L1060 430L1064 438M1095 500L1130 495L1160 500L1180 490H1230M1100 505L1135 498M1105 495L1140 505H1170M1258 620L1272 605V560L1264 545L1276 530V520M1260 624L1276 608V562L1268 546L1280 530M1264 628L1280 610V600M1268 630L1284 612V600M1252 630L1268 604V570M1320 510V530M1328 510V535M1336 520V600L1340 610V625M1310 590V608L1300 615H1280M1322 592V612H1350M1290 625L1300 612H1340M1133 580V635M1080 540V520L1095 505M1013 560V600M1440 360L1445 363H1460M1280 620H1350M1275 618H1345M1278 600V540M1282 596V545M1390 498H1460L1465 490V475' +
    traces(C, 10, [[400, 500, 250, 40], [330, 590, 40, 300]]) + traces(D, 9, [[60, 590, 60, 300], [120, 800, 180, 80], [180, 565, 110, 70]]);
  const cross = (x, y) => `M${x - 1} ${y}h3v1h-3zM${x} ${y - 1}h1v3h-1z`;
  let plus = '';
  each(A, '571 115 0 0;571 128 0 0;571 145 0 0;571 158 0 0;571 172 0 0;571 184 0 0;127 350 0 0;127 360 0 0;127 370 0 0;125 845 0 0;125 852 0 0;192 835 0 0;192 868 0 0;295 727 0 0;712 497 0 0;733 499 0 0;628 550 0 0;638 742 0 0;490 668 0 0;504 668 0 0', (x, y) => { plus += cross(x, y); });
  each(C, '515 352 0 0;528 343 0 0;607 973 0 0;568 518 0 0;728 350 0 0;728 362 0 0;524 850 0 0', (x, y) => { plus += cross(x, y); });
  each(D, '364 731 0 0;614 676 0 0;610 782 0 0;607 886 0 0;127 886 0 0;139 886 0 0;133 896 0 0;129 906 0 0;127 914 0 0;176 940 0 0;562 608 0 0;560 598 0 0;668 653 0 0', (x, y) => { plus += cross(x, y); });
  const star = (ox, x, y) => { const X = Math.round(ox + x / 3), Y = Math.round(320 + y / 3); return `<path d="M${X - 2} ${Y - 2}h4v4h-4zM${X - 3} ${Y}h6M${X} ${Y - 3}v6" fill="#ffd83b" stroke="#ffd83b"/>`; };
  const tr = (ox, w) => `<path transform="translate(${ox} 320) scale(.33333)" d="${t[ox]}" fill="none" stroke="#e0e0e0" stroke-width="${w}"/>`;
  const mark2 = (x, y) => `<text transform="translate(${x} ${y}) rotate(-45)" font-family="Noto Sans CJK SC,sans-serif" font-weight="300" font-size="17" fill="#bab2a8" style="mix-blend-mode:multiply">XZZ@XZZHK</text>`;
  const dia = (x, y) => `<path d="M${x - 3} ${y}l3-3 3 3-3 3z" fill="#808080"/>`;
  return `<clipPath id="board"><path clip-rule="evenodd" d="${OUT}"/><path clip-rule="evenodd" transform="matrix(-1 0 0 1 1955 0)" d="${OUT}"/></clipPath>
  <g fill="#006c38" fill-rule="evenodd" stroke="#4d9a72" stroke-width=".6"><path d="${OUT}"/><path transform="matrix(-1 0 0 1 1955 0)" d="${OUT}"/></g>
  <g fill="none" stroke-width="1" shape-rendering="crispEdges" clip-path="url(#board)"><path stroke="#004a10" d="${dark}"/><path stroke="#008040" d="${light}"/></g>
  <path d="M836 364h30v42h-30z" fill="none" stroke="#e0e0e0" transform="translate(.5 .5)"/>
  <path d="M531 339h9l3 4v22l-3 4h-9" fill="none" stroke="#e0e0e0" stroke-width="1.700"/>
  <g shape-rendering="crispEdges"><path d="${L.w}" fill="#dcdcdc"/><path d="${L.g}" fill="#006c38"/><path d="${L.y}" fill="#ffd83b"/><path d="${L.k}" fill="#848484"/><path d="${L.t}" fill="#007a80"/><path d="${plus}" fill="#ffd83b"/></g>
  ${tr(A, 8)}${tr(B, 8)}${tr(C, 6)}${tr(D, 6)}
  <g fill="#fff" stroke="#808080" stroke-width="2.200">${holes.map(([x, y]) => `<circle cx="${x}" cy="${y}" r="4.800"/>`).join('')}</g>
  ${star(A, 422, 958)}${star(A, 422, 991)}${star(B, 638, 910)}${star(B, 664, 892)}${star(B, 682, 918)}${star(B, 143, 931)}${star(B, 145, 982)}
  ${dia(497, 365)}${dia(946, 611)}${dia(992, 589)}${dia(1463, 367)}<circle cx="497" cy="642" r="3.700" fill="#808080"/>
  <path d="M948 626l14 14-9 12-15-16z" fill="none" stroke="#e0e0e0"/><path d="M943 631l6-2 5 7-5 2zM948 641l6-2 4 8-5 2z" fill="#848484"/>
  <path d="M887 344l12 3-3 7-10-3z" fill="none" stroke="#e0e0e0"/><path d="M887 346l3 1-2 6-3-1zM896 348l3 1-2 5-4-1z" fill="#ffd83b"/>
  <path d="M471 511l7 2-3 13-7-4z" fill="none" stroke="#e0e0e0"/><path d="M1414 535l8-6 2 2-8 8z" fill="none" stroke="#e0e0e0"/>
  ${mark2(673, 307)}${mark2(1123, 307)}${mark2(673, 707)}${mark2(1123, 707)}`;
}
define('pcb-view', `
:host{display:block;position:relative;flex:1;min-height:0;background:#fff;overflow:hidden}
svg{width:100%;height:100%}
layer-panel{position:absolute;left:1px;top:0}`,
`<svg viewBox="441 132 1072 706" preserveAspectRatio="xMidYMid meet" role="img" aria-label="PCB layout"></svg><layer-panel></layer-panel>`,
(el, root) => { root.querySelector('svg').innerHTML = drawBoards(); });

define('side-handle', `
:host{display:flex;align-items:center;width:10px;flex:none;background:#fbfffb;border-left:1px solid #dcdcdc;padding-top:16px}
:host([end]){background:#fafafa;padding-top:34px}
:host(:not([end])){border-right:1px solid #dcdcdc}
button{width:100%}`,
`<button aria-label="Toggle panel"><svg width="9" height="108" viewBox="0 0 9 108"><path fill="#d8ecff" stroke="#9fd0ff"/><path class="c" d="M6 48l-3 4 3 4" fill="none" stroke="#3f9bff" stroke-width="1.200"/></svg></button>`,
(el, root) => root.querySelector('path').setAttribute('d', el.hasAttribute('end') ? 'M9 0L0 12V96L9 108' : 'M-1 0L8 12V98L-1 108'));

define('app-footer', `
:host{display:block;height:20px;background:#0091dc;color:#fff;text-align:center;font:bold 15px/20px "DejaVu Sans Mono",monospace;white-space:nowrap}`,
`XZZ Schematics https://www.xzztools.com`);

define('xzz-app', `
:host{display:flex;flex-direction:column;height:100vh;overflow:hidden}
main{display:flex;flex:1;min-height:0}
.left{display:flex;flex-direction:column;width:431px;flex:none}
.row{display:flex;flex:1;min-height:0}
.right{display:flex;flex-direction:column;flex:1;min-width:0}
.doc{display:flex;flex-direction:column;flex:1;min-width:0}`,
`<title-bar></title-bar><menu-bar></menu-bar>
<main><div class="left"><search-bar></search-bar><div class="row"><nav-rail></nav-rail><file-tree></file-tree></div></div>
<side-handle></side-handle>
<div class="right"><doc-tabs></doc-tabs><div class="row"><div class="doc"><tool-bar></tool-bar><pcb-view></pcb-view></div><side-handle end></side-handle></div></div></main>
<app-footer></app-footer>`);
</script>
</body>
</html>
